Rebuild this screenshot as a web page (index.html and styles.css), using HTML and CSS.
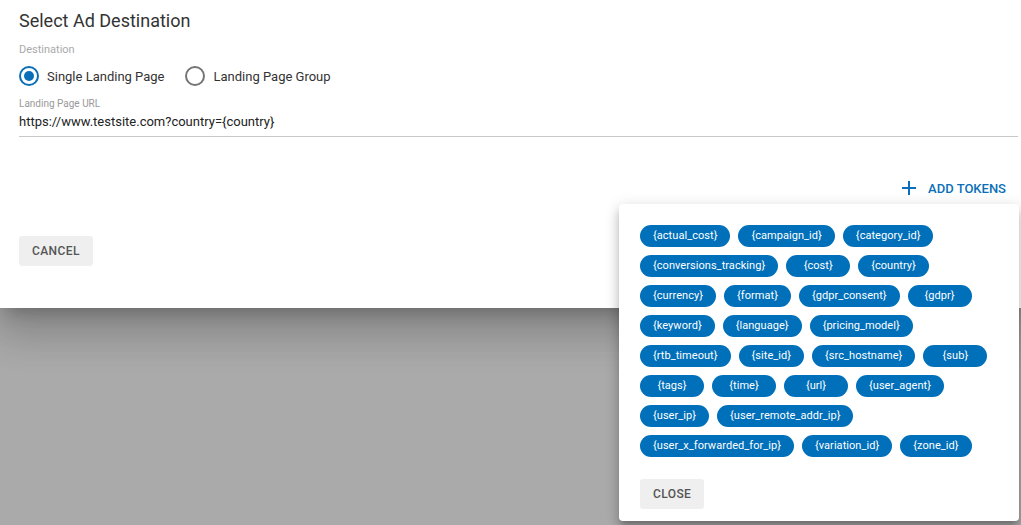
FILE: index.html
```html
<!DOCTYPE html>
<html>
<head>
    <meta charset="UTF-8">
    <title>Select Ad Destination</title>
    <link rel="stylesheet" href="styles.css">
</head>
<body>
    <div class="dialog">
        <h2 class="dialog-title">Select Ad Destination</h2>

        <div class="field-label">Destination</div>
        <div class="radio-group">
            <label class="radio checked"><span class="radio-circle"></span>Single Landing Page</label>
            <label class="radio"><span class="radio-circle"></span>Landing Page Group</label>
        </div>

        <div class="text-field">
            <div class="small-label">Landing Page URL</div>
            <div class="url-value">https://www.testsite.com?country={country}</div>
        </div>

        <div class="tokens-row">
            <button class="add-tokens">
                <svg width="14" height="14" viewBox="0 0 14 14"><path d="M7 0v14M0 7h14" stroke="#0a6fb8" stroke-width="2" fill="none"/></svg>
                ADD TOKENS
            </button>
        </div>

        <div class="dialog-actions">
            <button class="grey-btn">CANCEL</button>
        </div>
    </div>

    <div class="backdrop"></div>

    <div class="token-popover">
        <div class="chips">
            <span class="chip">{actual_cost}</span>
            <span class="chip">{campaign_id}</span>
            <span class="chip">{category_id}</span>
            <span class="chip">{conversions_tracking}</span>
            <span class="chip">{cost}</span>
            <span class="chip">{country}</span>
            <span class="chip">{currency}</span>
            <span class="chip">{format}</span>
            <span class="chip">{gdpr_consent}</span>
            <span class="chip">{gdpr}</span>
            <span class="chip">{keyword}</span>
            <span class="chip">{language}</span>
            <span class="chip">{pricing_model}</span>
            <span class="chip">{rtb_timeout}</span>
            <span class="chip">{site_id}</span>
            <span class="chip">{src_hostname}</span>
            <span class="chip">{sub}</span>
            <span class="chip">{tags}</span>
            <span class="chip">{time}</span>
            <span class="chip">{url}</span>
            <span class="chip">{user_agent}</span>
            <span class="chip">{user_ip}</span>
            <span class="chip">{user_remote_addr_ip}</span>
            <span class="chip">{user_x_forwarded_for_ip}</span>
            <span class="chip">{variation_id}</span>
            <span class="chip">{zone_id}</span>
        </div>
        <button class="grey-btn">CLOSE</button>
    </div>
</body>
</html>
```

FILE: styles.css
```css
* {
    box-sizing: border-box;
}

html, body {
    height: 100%;
}

body {
    margin: 0;
    background-color: #aaaaaa;
    font-family: 'Roboto', 'Liberation Sans', sans-serif;
    color: #222;
    display: flex;
    flex-direction: column;
    overflow: hidden;
}

.dialog {
    background-color: #fff;
    height: 308px;
    padding: 9px 3px 0 19px;
    box-shadow: 0 11px 15px -7px rgba(0,0,0,0.2), 0 24px 38px 3px rgba(0,0,0,0.14), 0 9px 46px 8px rgba(0,0,0,0.12);
    position: relative;
    z-index: 1;
}

.dialog-title {
    margin: 0;
    font-size: 18px;
    font-weight: 400;
    line-height: 24px;
    color: #333;
}

.field-label {
    margin-top: 10px;
    font-size: 11px;
    line-height: 14px;
    color: #aaa;
}

.radio-group {
    display: flex;
    gap: 21px;
    margin-top: 8px;
    height: 22px;
    align-items: center;
}

.radio {
    display: flex;
    align-items: center;
    gap: 8px;
    font-size: 13px;
    color: #333;
}

.radio-circle {
    width: 20px;
    height: 20px;
    border: 2px solid #757575;
    border-radius: 50%;
    position: relative;
}

.radio.checked .radio-circle {
    border-color: #0a6fb8;
}

.radio.checked .radio-circle::after {
    content: "";
    position: absolute;
    left: 3px;
    top: 3px;
    width: 10px;
    height: 10px;
    border-radius: 50%;
    background-color: #0a6fb8;
}

.text-field {
    margin-top: 11px;
    border-bottom: 1px solid #c8c8c8;
    padding-bottom: 5px;
}

.small-label {
    font-size: 10px;
    line-height: 12px;
    color: #999;
}

.url-value {
    margin-top: 3px;
    font-size: 13px;
    line-height: 18px;
    color: #222;
}

.tokens-row {
    display: flex;
    justify-content: flex-end;
    margin-top: 40px;
    padding-right: 12px;
}

.add-tokens {
    display: flex;
    align-items: center;
    gap: 12px;
    border: none;
    background: none;
    padding: 0;
    font-family: inherit;
    font-size: 13px;
    font-weight: 500;
    color: #0a6fb8;
    height: 22px;
}

.dialog-actions {
    margin-top: 37px;
}

.grey-btn {
    border: none;
    background-color: #efefef;
    color: #555;
    border-radius: 3px;
    font-family: inherit;
    font-size: 12px;
    font-weight: 500;
    letter-spacing: 0.4px;
    height: 30px;
    padding: 0 13px;
}

.backdrop {
    flex: 1;
}

.token-popover {
    position: absolute;
    left: 619px;
    top: 204px;
    width: 400px;
    height: 317px;
    background-color: #fff;
    border-radius: 4px;
    padding: 21px 21px 12px 21px;
    box-shadow: 0 5px 5px -3px rgba(0,0,0,0.2), 0 8px 10px 1px rgba(0,0,0,0.14), 0 3px 14px 2px rgba(0,0,0,0.12);
    z-index: 2;
}

.chips {
    display: flex;
    flex-wrap: wrap;
    gap: 8px 8px;
    margin-bottom: 22px;
}

.chip {
    background-color: #0070ba;
    color: #fff;
    font-size: 11px;
    letter-spacing: 0.05px;
    height: 22px;
    line-height: 22px;
    min-width: 64px;
    padding: 0 13px;
    border-radius: 11px;
    text-align: center;
}
```
